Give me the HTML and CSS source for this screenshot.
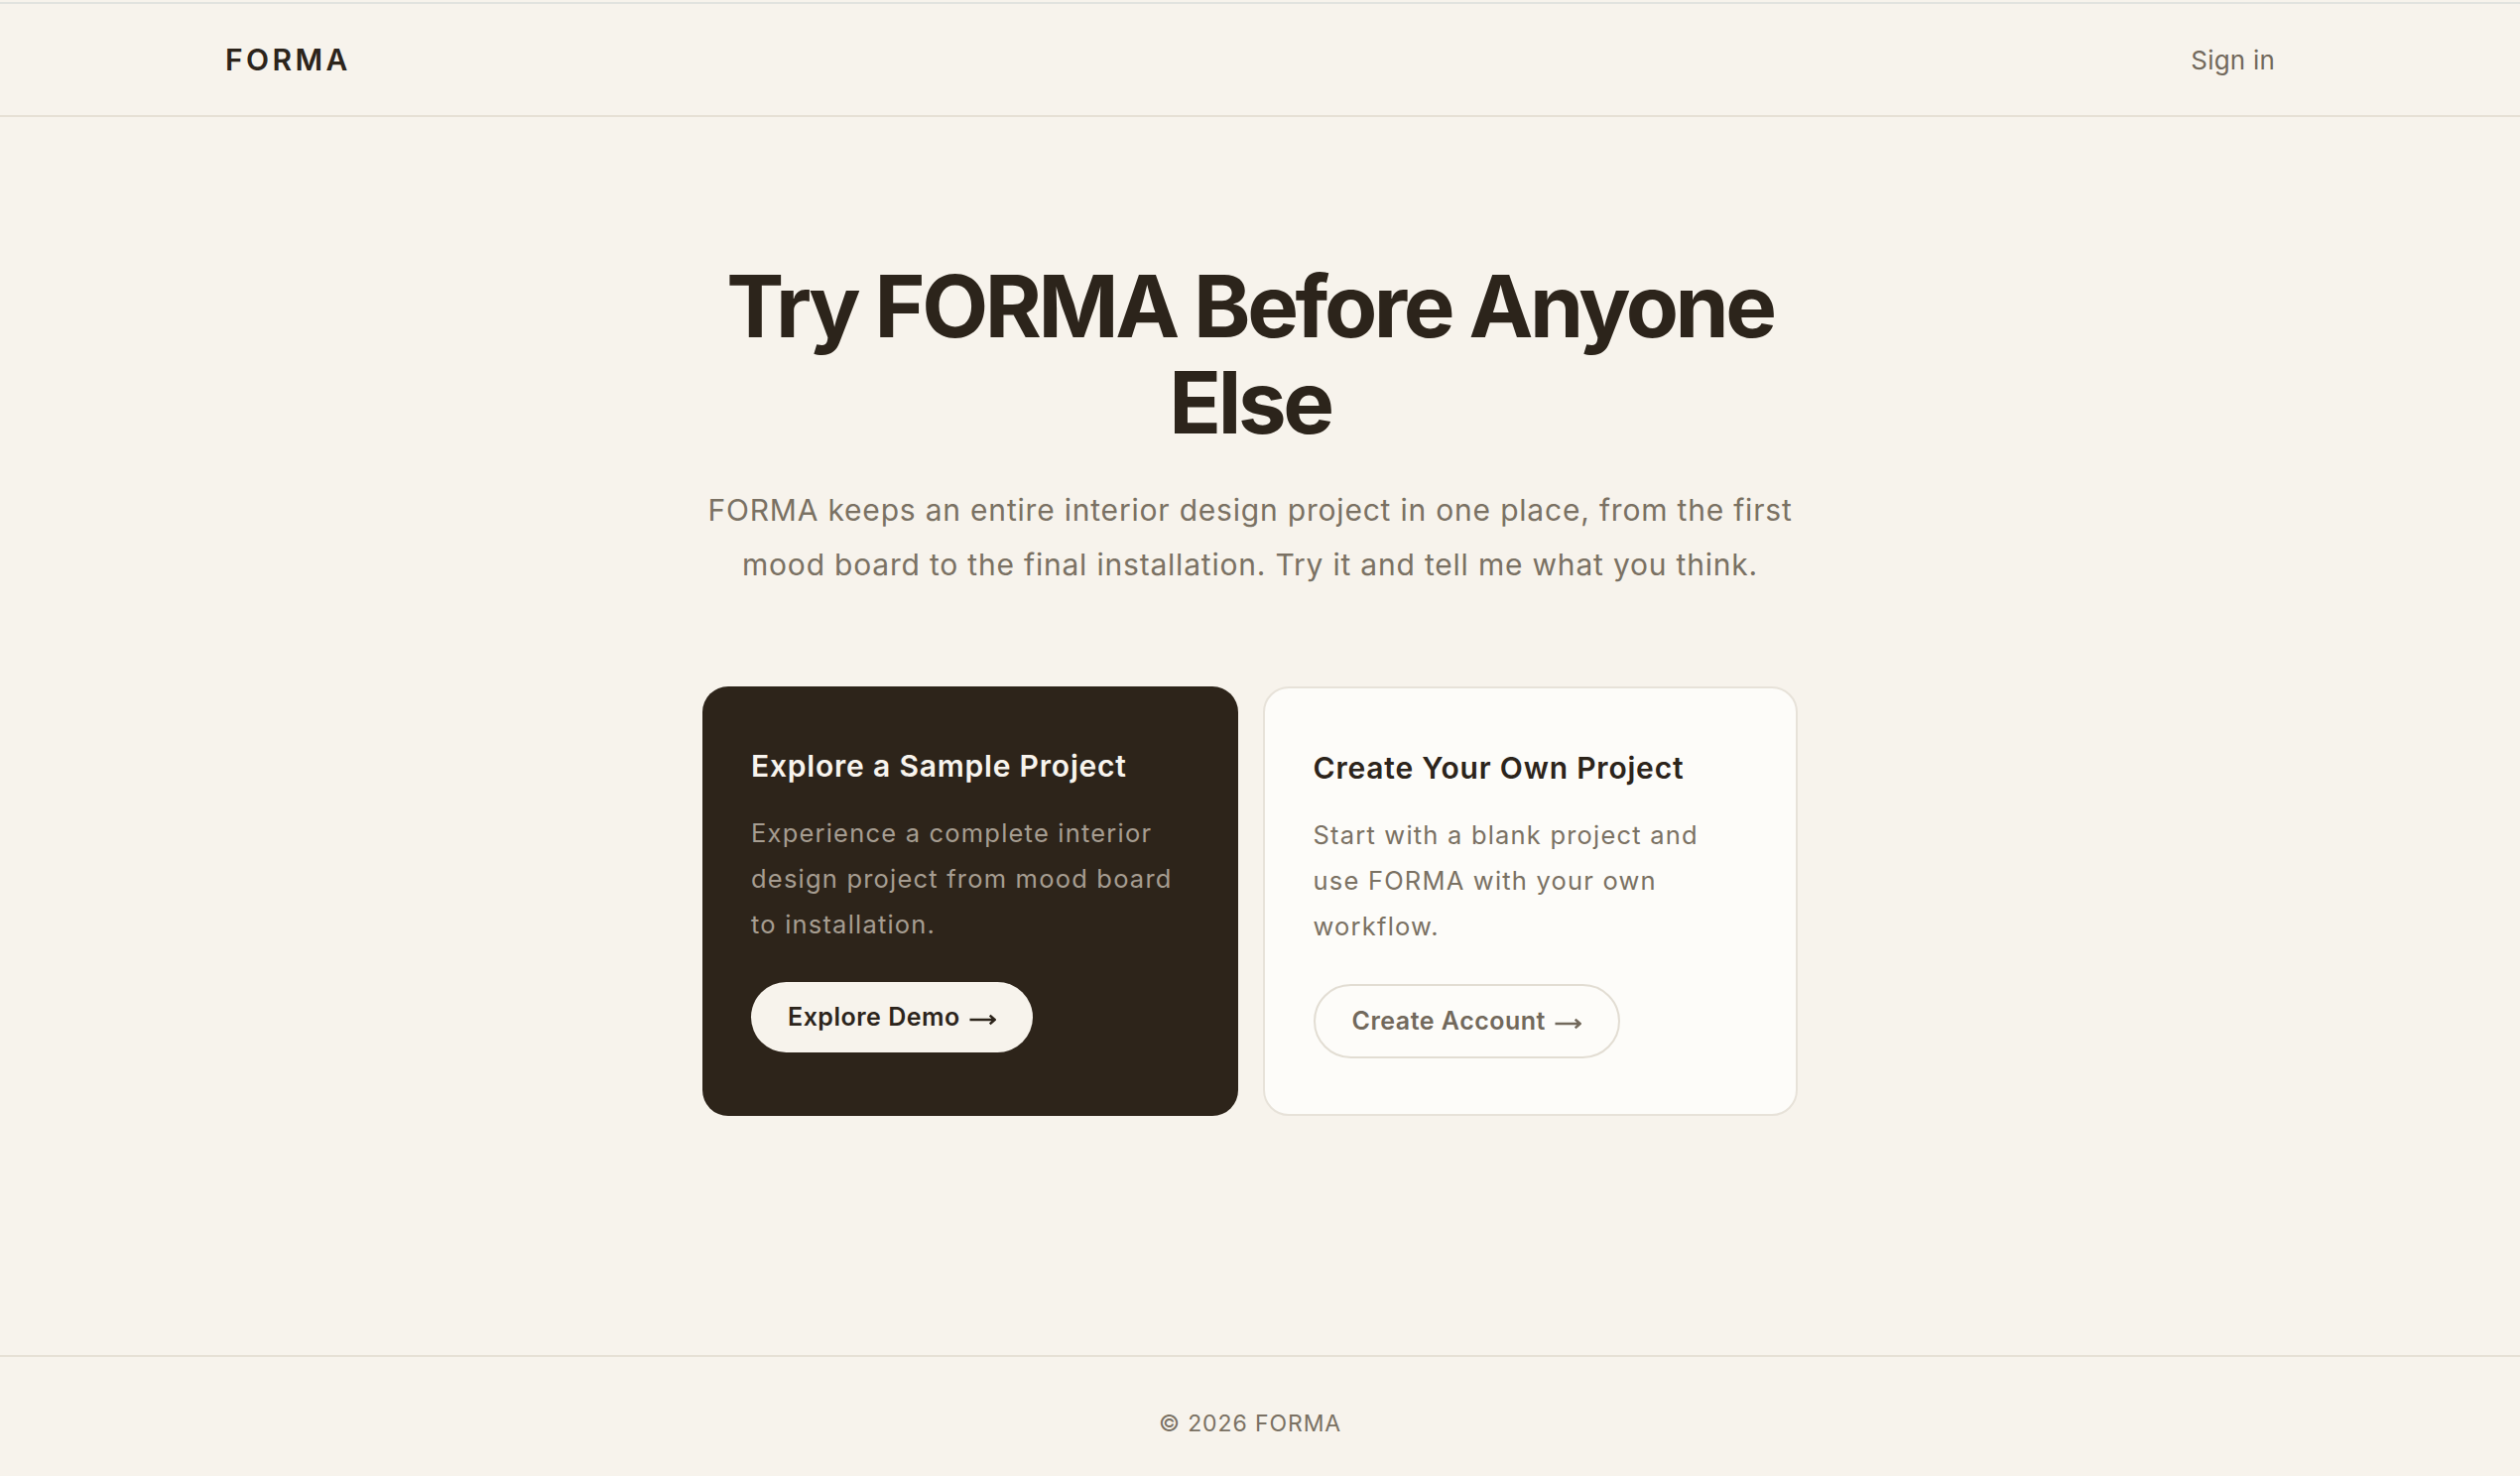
FILE: index.html
```html
<!DOCTYPE html>
<html lang="en">
<head>
<meta charset="utf-8">
<title>FORMA — Early Access</title>
<link rel="stylesheet" href="styles.css">
</head>
<body>
<header class="site-header">
  <div class="container nav">
    <a class="logo" href="#">FORMA</a>
    <a class="signin" href="#">Sign in</a>
  </div>
</header>
<main class="hero">
  <div class="hero-inner">
    <h1 class="hero-title">Try FORMA Before Anyone Else</h1>
    <p class="lead">FORMA keeps an entire interior design project in one place, from the first mood board to the final installation. Try it and tell me what you think.</p>
    <div class="cards">
      <section class="card card-dark">
        <h2 class="card-title">Explore a Sample Project</h2>
        <p class="card-text">Experience a complete interior design project from mood board to installation.</p>
        <div class="card-actions">
          <a class="btn btn-light" href="#"><span>Explore Demo</span><svg class="arrow" viewBox="0 0 28 12" width="28" height="12" aria-hidden="true"><path d="M0.5 6H26.5M21.5 1.5L26.5 6L21.5 10.5" fill="none" stroke="currentColor" stroke-width="2.6" stroke-linecap="butt" stroke-linejoin="miter"/></svg></a>
        </div>
      </section>
      <section class="card card-light">
        <h2 class="card-title">Create Your Own Project</h2>
        <p class="card-text">Start with a blank project and use FORMA with your own workflow.</p>
        <div class="card-actions">
          <a class="btn btn-outline" href="#"><span>Create Account</span><svg class="arrow" viewBox="0 0 28 12" width="28" height="12" aria-hidden="true"><path d="M0.5 6H26.5M21.5 1.5L26.5 6L21.5 10.5" fill="none" stroke="currentColor" stroke-width="2.6" stroke-linecap="butt" stroke-linejoin="miter"/></svg></a>
        </div>
      </section>
    </div>
  </div>
</main>
<footer class="site-footer">
  <p class="copyright">© 2026 FORMA</p>
</footer>
</body>
</html>
```
FILE: styles.css
```css
* { box-sizing: border-box; }

html, body { margin: 0; padding: 0; }

body {
  background: #f7f3ec;
  color: #2c241b;
  font-family: Inter, "Noto Sans", "Liberation Sans", sans-serif;
}

a { text-decoration: none; }

.site-header {
  margin-top: 2px;
  border-top: 2px solid #e1e3df;
  border-bottom: 2px solid #e6e0d5;
  padding-right: 20px;
}

.container {
  width: 2066px;
  margin: 0 auto;
}

.nav {
  height: 112px;
  display: flex;
  align-items: center;
  justify-content: space-between;
}

.logo {
  font-size: 30px;
  font-weight: 600;
  letter-spacing: 3.4px;
  color: #2c241b;
}

.signin {
  font-size: 26px;
  font-weight: 400;
  letter-spacing: 0.2px;
  color: #72695c;
}

.hero {
  padding: 142px 20px 241px 0;
}

.hero-inner {
  width: 1104px;
  margin: 0 auto;
}

.hero-title {
  margin: 0;
  font-size: 87px;
  line-height: 97px;
  font-weight: 700;
  letter-spacing: -3.4px;
  text-align: center;
  color: #2c241b;
}

.lead {
  margin: 33px 0 0;
  font-size: 30px;
  line-height: 55px;
  letter-spacing: 0.8px;
  text-align: center;
  color: #7a7163;
}

.cards {
  margin-top: 95px;
  display: grid;
  grid-template-columns: 1fr 1fr;
  gap: 25px;
}

.card {
  border-radius: 26px;
  padding: 59px 49px 56px;
}

.card-dark {
  background: #2d241a;
  color: #f8f4ee;
}

.card-light {
  background: #fdfcf9;
  border: 2px solid #e7e2d9;
  color: #2c241b;
}

.card-title {
  margin: 0;
  font-size: 30px;
  line-height: 42px;
  font-weight: 600;
  letter-spacing: 0.8px;
}

.card-text {
  margin: 24px 0 0;
  max-width: 432px;
  font-size: 25.5px;
  line-height: 46px;
  letter-spacing: 1.2px;
}

.card-dark .card-text { color: #a69d91; }
.card-light .card-text { color: #7a7163; }

.card-actions {
  margin-top: 35px;
  display: flex;
}

.btn {
  display: inline-flex;
  align-items: center;
  gap: 9px;
  padding: 20px 37px;
  border-radius: 999px;
  font-size: 25px;
  line-height: 31px;
  font-weight: 600;
  letter-spacing: 0.5px;
}

.arrow {
  display: block;
  width: 27px;
  height: 12px;
  margin-top: 4px;
}

.btn-light {
  background: #f7f3ec;
  color: #2c241b;
}

.btn-outline {
  background: transparent;
  border: 2px solid #e2ddd3;
  color: #72695c;
}

.site-footer {
  border-top: 2px solid #e6e0d5;
  padding: 51px 20px 34px 0;
}

.copyright {
  margin: 0;
  text-align: center;
  font-size: 23px;
  line-height: 33px;
  letter-spacing: 0.9px;
  color: #7a7163;
}
```
